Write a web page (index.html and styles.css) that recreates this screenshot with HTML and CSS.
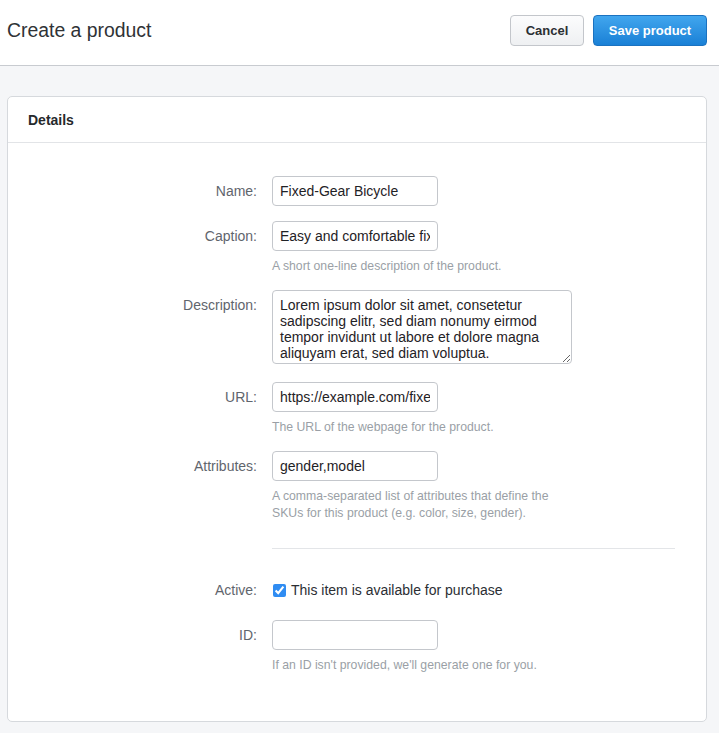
FILE: index.html
```html
<!DOCTYPE html>
<html lang="en">
<head>
<meta charset="utf-8">
<title>Create a product</title>
<link rel="stylesheet" href="styles.css">
</head>
<body>
<header class="topbar">
  <h1 class="title">Create a product</h1>
  <div class="actions">
    <button class="btn btn-default" type="button">Cancel</button>
    <button class="btn btn-primary" type="button">Save product</button>
  </div>
</header>
<main class="page">
  <section class="card">
    <div class="card-header">Details</div>
    <form class="form">
      <div class="field">
        <label class="label" for="name">Name:</label>
        <div class="control">
          <input class="input" id="name" type="text" value="Fixed-Gear Bicycle">
        </div>
      </div>
      <div class="field">
        <label class="label" for="caption">Caption:</label>
        <div class="control">
          <input class="input" id="caption" type="text" value="Easy and comfortable fixed-gear bicycle">
          <p class="help">A short one-line description of the product.</p>
        </div>
      </div>
      <div class="field field-desc">
        <label class="label" for="desc">Description:</label>
        <div class="control">
          <textarea class="textarea" id="desc" spellcheck="false">Lorem ipsum dolor sit amet, consetetur sadipscing elitr, sed diam nonumy eirmod tempor invidunt ut labore et dolore magna aliquyam erat, sed diam voluptua.</textarea>
        </div>
      </div>
      <div class="field">
        <label class="label" for="url">URL:</label>
        <div class="control">
          <input class="input" id="url" type="text" value="https://example.com/fixed-gear-bicycle">
          <p class="help">The URL of the webpage for the product.</p>
        </div>
      </div>
      <div class="field">
        <label class="label" for="attrs">Attributes:</label>
        <div class="control">
          <input class="input" id="attrs" type="text" value="gender,model">
          <p class="help">A comma-separated list of attributes that define the<br>SKUs for this product (e.g. color, size, gender).</p>
        </div>
      </div>
      <div class="field field-sep">
        <div></div>
        <hr class="sep">
      </div>
      <div class="field field-check">
        <span class="label">Active:</span>
        <label class="control check">
          <input class="checkbox" type="checkbox" checked>
          <span>This item is available for purchase</span>
        </label>
      </div>
      <div class="field">
        <label class="label" for="pid">ID:</label>
        <div class="control">
          <input class="input" id="pid" type="text" value="">
          <p class="help">If an ID isn't provided, we'll generate one for you.</p>
        </div>
      </div>
    </form>
  </section>
</main>
</body>
</html>
```
FILE: styles.css
```css
* { box-sizing: border-box; }

html, body {
  margin: 0;
  padding: 0;
}

body {
  background: #f5f6f8;
  font-family: "Liberation Sans", Arial, Helvetica, sans-serif;
  color: #333;
}

.topbar {
  height: 66px;
  background: #fff;
  border-bottom: 1px solid #c8cbd0;
  display: flex;
  align-items: center;
  justify-content: space-between;
  padding: 0 12px 4px 7px;
}

.title {
  margin: 0;
  font-size: 19.4px;
  font-weight: normal;
  color: #2f3236;
}

.actions {
  display: flex;
  gap: 9px;
}

.btn {
  height: 31px;
  border-radius: 4px;
  font-family: inherit;
  font-size: 13px;
  font-weight: bold;
  padding: 0;
  cursor: pointer;
}

.btn-default {
  width: 74px;
  color: #2b2f33;
  background: linear-gradient(#fcfcfd, #eef0f2);
  border: 1px solid #c3c6cb;
}

.btn-primary {
  width: 114px;
  color: #fff;
  background: linear-gradient(#41a6ee, #1a80d6);
  border: 1px solid #1b72c0;
}

.page {
  padding: 30px 12px 12px 7px;
}

.card {
  background: #fff;
  border: 1px solid #d6d9dd;
  border-radius: 5px;
}

.card-header {
  height: 46px;
  border-bottom: 1px solid #e2e4e7;
  padding: 0 20px;
  display: flex;
  align-items: center;
  font-size: 14px;
  font-weight: bold;
  color: #26292c;
}

.form {
  display: flex;
  flex-direction: column;
  gap: 15px;
  padding: 33px 31px 47px 0;
}

.field {
  display: grid;
  grid-template-columns: 249px 1fr;
  column-gap: 15px;
  align-items: start;
}

.label {
  text-align: right;
  font-size: 14px;
  line-height: 30px;
  color: #5f656d;
}

.control {
  min-width: 0;
}

.input {
  display: block;
  width: 166px;
  height: 30px;
  border: 1px solid #c4c7cc;
  border-radius: 4px;
  padding: 0 7px;
  font-family: inherit;
  font-size: 14px;
  color: #1f2226;
  background: #fff;
  outline: none;
}

.textarea {
  display: block;
  width: 300px;
  height: 74px;
  margin-bottom: 3px;
  border: 1px solid #c4c7cc;
  border-radius: 4px;
  padding: 6px 7px;
  font-family: inherit;
  font-size: 14px;
  line-height: 16px;
  color: #1f2226;
  background: #fff;
  overflow: hidden;
  outline: none;
}

.help {
  margin: 7px 0 0;
  font-size: 12.25px;
  line-height: 17px;
  color: #9a9fa6;
}

.field-sep {
  margin-top: 11px;
  margin-bottom: 16px;
}

.sep {
  margin: 0;
  border: 0;
  border-top: 1px solid #e3e5e8;
  height: 0;
}

.field-check {
  margin-bottom: 5px;
}

.field-check .label {
  line-height: 20px;
}

.check {
  display: flex;
  align-items: center;
  height: 20px;
  font-size: 14px;
  color: #2b2e33;
}

.checkbox {
  width: 13px;
  height: 13px;
  margin: 0 5px 0 1px;
  accent-color: #2f8cf2;
}
```
